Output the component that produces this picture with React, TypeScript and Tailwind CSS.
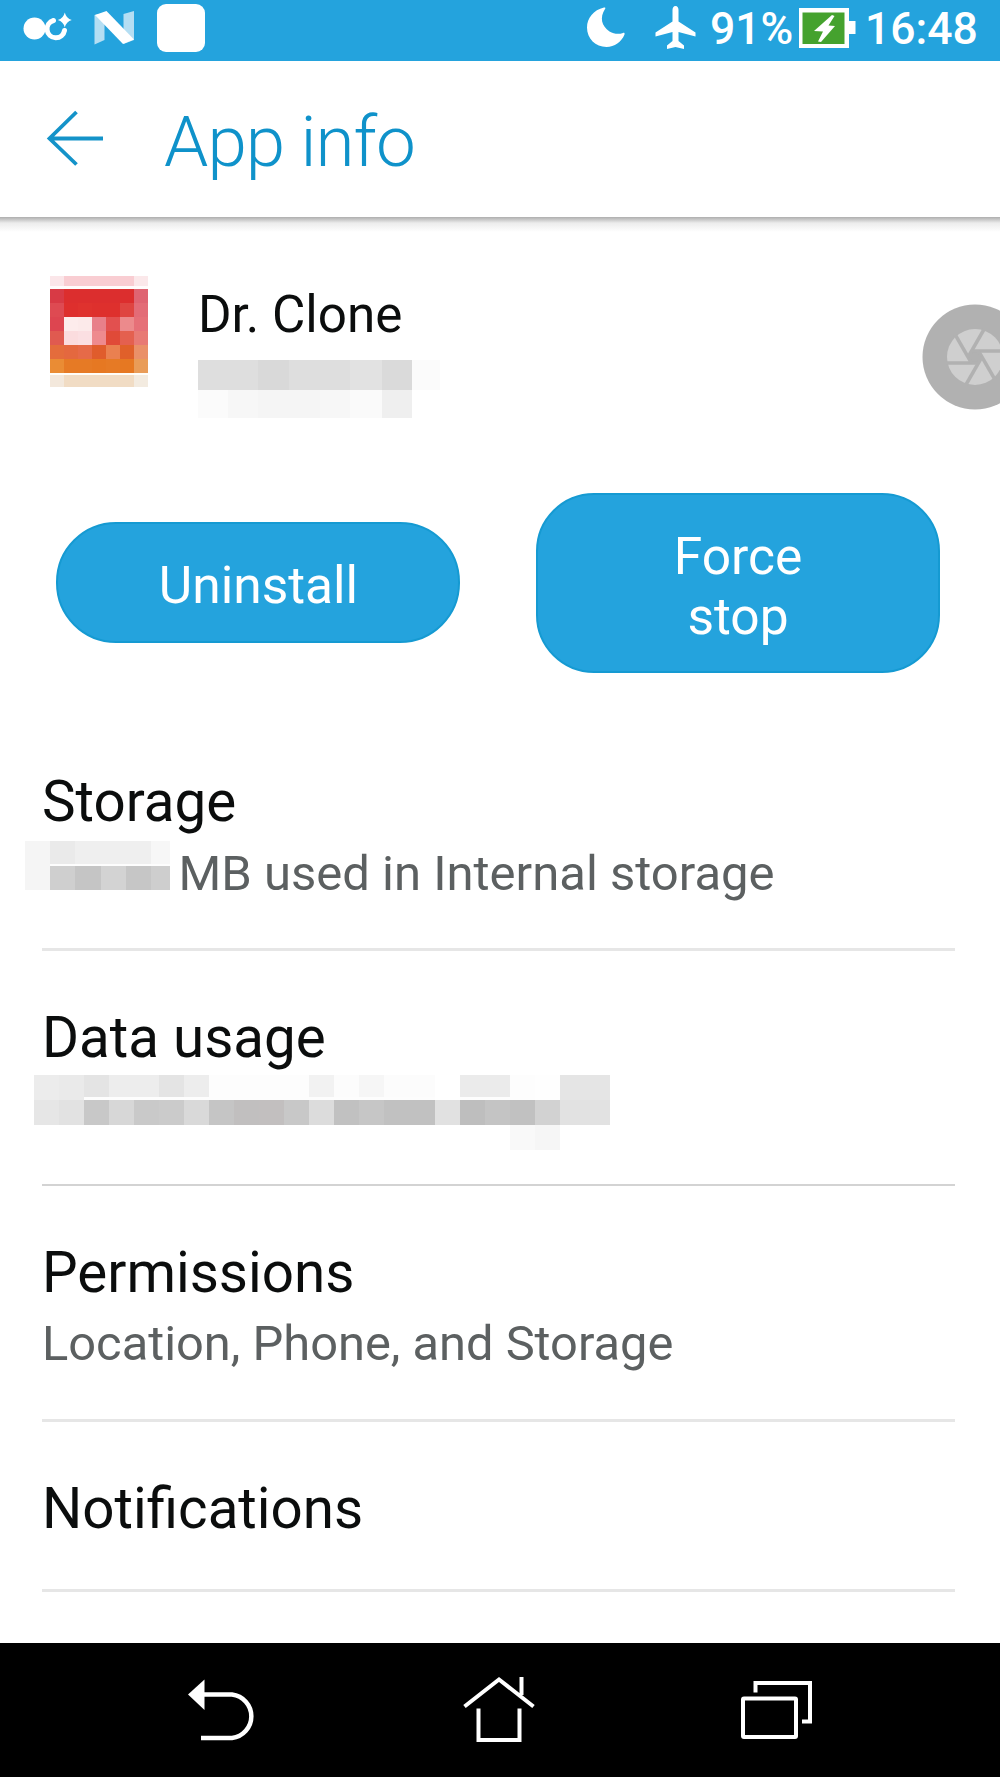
import type { ReactNode } from 'react';

type MosaicProps = {
  rows: string[];
  cellWidths: number[];
  rowHeights: number[];
  className?: string;
};

/** Pixelated block; each row is a space separated list of hex colours. */
function Mosaic({ rows, cellWidths, rowHeights, className = '' }: MosaicProps) {
  return (
    <div
      className={`grid shrink-0 ${className}`}
      style={{
        gridTemplateColumns: cellWidths.map((w) => `${w}px`).join(' '),
        gridTemplateRows: rowHeights.map((h) => `${h}px`).join(' '),
      }}
    >
      {rows.flatMap((row, y) =>
        row.split(' ').map((c, x) => <div key={`${y}-${x}`} style={{ backgroundColor: `#${c}` }} />),
      )}
    </div>
  );
}

const ICON_ROWS = [
  'fbe6e9 f9cdd2 f9cdd2 f9cdd2 f9cdd2 f9cdd2 fbe8ea',
  'fffbfb fffbfb fffbfb fffbfb fffbfb fffbfb fffbfb',
  'd83a45 dc2e2e dc2e2e dc2e2e dc2e2e dc2e2e df6472',
  'de4a52 de2f2d df322e de302d de302d df4541 e36c77',
  'dd4550 fdecec fceaea e8808a e2504f ec8a8c e67078',
  'e05a50 fbdcde fbdfe2 ee8a8e e04a38 e4604f e87a74',
  'e46c3c e4683f e66a48 e05c2c ea8050 e0602a ea9068',
  'ea8c34 e67a25 e67a25 e67822 e67a25 e67822 e99c58',
  'fffdf8 fffdf8 fffdf8 fffdf8 fffdf8 fffdf8 fffdf8',
  'f3e8dc f1dcc4 f1dcc4 f1dcc4 f1dcc4 f1dcc4 f3ebe0',
];

const PACKAGE_ROWS = [
  'dedede dedede d9d9d9 dedede dedede e2e2e2 dadada fbfbfb',
  'fbfbfb f7f7f7 f5f5f5 f5f5f5 f7f7f7 fafafa efefef ffffff',
];

const STORAGE_ROWS = [
  'f5f5f5 eaeaea efefef efefef efefef f7f7f7',
  'f5f5f5 fdfdfd fdfdfd fdfdfd fdfdfd fdfdfd',
  'f5f5f5 cfcfcf c5c5c5 d3d3d3 c6c6c6 cecece',
];

const DATA_ROWS = [
  'ececec eaeaea e4e4e4 ededed ededed e4e4e4 ededed fdfdfd fdfdfd fdfdfd fdfdfd f2f2f2 fcfcfc f6f6f6 fcfcfc fcfcfc ffffff ebebeb ebebeb fdfdfd fefefe e5e5e5 e5e5e5',
  'ececec eaeaea fdfdfd fdfdfd fdfdfd fdfdfd fdfdfd fdfdfd fdfdfd fdfdfd fdfdfd fdfdfd fdfdfd fdfdfd fdfdfd fdfdfd ffffff fdfdfd fdfdfd fdfdfd fefefe e5e5e5 e5e5e5',
  'e6e6e6 e2e2e2 c8c8c8 d7d7d7 c9c9c9 cbcbcb d9d9d9 c5c5c5 c1bfbf c2bfbf c8c8c8 dcdcdc c1c1c1 c6c6c6 c1c1c1 c1c1c1 e1e1e1 bebebe c4c4c4 c1c1c1 d2d2d2 e2e2e2 e2e2e2',
  'ffffff ffffff ffffff ffffff ffffff ffffff ffffff ffffff ffffff ffffff ffffff ffffff ffffff ffffff ffffff ffffff ffffff ffffff ffffff f9f9f9 f6f6f6 ffffff ffffff',
];

function StatusBar() {
  return (
    <div className="flex h-[61px] items-start bg-[#24a3dd]">
      <svg className="ml-5 h-[56px] w-[190px]" viewBox="20 0 190 56">
        <circle cx="34.5" cy="28.5" r="11" fill="#fff" />
        <path d="M53.500 20.500a8.800 8.800 0 1 0 11 10" fill="none" stroke="#fff" strokeWidth="5" strokeLinecap="round" />
        <path d="M64.800 12.500q1.400 6 7 7.500-5.600 1.500-7 7.500-1.400-6-7-7.500 5.600-1.500 7-7.500z" fill="#fff" />
        <path d="M94.500 15l10-2v27l-10 4.500zM123.500 14l10.500-3v29l-10.500 4z" fill="#b4def3" />
        <path d="M95 15l11.500-4L134 39.500 123 44z" fill="#fff" />
        <rect x="157" y="4" width="48" height="48" rx="9" fill="#fff" />
      </svg>
      <svg className="ml-[374px] h-[56px] w-[120px]" viewBox="584 0 120 56">
        <path d="M604 7.500C593.500 10 587 18 587 27.500c0 11 8.500 19.500 19.500 19.500 8 0 15-5 18-12.500.5-1.500-.5-2-1.500-1.600-4 1.600-9 1.300-13.500-1.500-8-5-10-14-4.500-22.300.8-1.200.3-1.800-1-1.600z" fill="#fff" />
        <path d="M675.500 6c2 0 3 1.800 3 4v11.500L695.500 32.500v4L678.500 32v9l5.500 4.500V49l-8.500-2-8.500 2v-3.500l5.500-4.500v-9L655.500 36.500v-4L672.500 21.500V10c0-2.200 1-4 3-4z" fill="#fff" />
      </svg>
      <span className="ml-[6px] w-[85px] text-[44.5px] leading-[59px] font-medium text-white">91%</span>
      <svg className="ml-[4px] h-[56px] w-[57px]" viewBox="799 0 57 56">
        <path d="M799 8h50v13h6.500v13H849v14h-50z" fill="#fff" />
        <rect x="802.500" y="12.500" width="42" height="31.500" fill="#45a22e" />
        <path d="M832 15l2.500 1-6 9.500 6.500.5-14 16-3-.5 5-10-9-.5z" fill="#fff" />
      </svg>
      <span className="ml-[9px] text-[44.5px] leading-[59px] font-medium text-white">16:48</span>
    </div>
  );
}

function Header() {
  return (
    <header>
      <div className="flex h-[156px] items-start">
        <svg className="mt-[48px] ml-[44px] h-[60px] w-[62px]" viewBox="44 109 62 60" fill="none" stroke="#1493c9" strokeWidth="3.8">
          <path d="M76.500 112L49.500 138.500l27 26M49.500 138.500H103" />
        </svg>
        <h1 className="mt-[41px] ml-[58px] text-[71px] leading-[80px] font-light tracking-[-1px] text-[#0f92ca]">App info</h1>
      </div>
      <div className="h-[15px] bg-linear-to-b from-[#aeaeae] via-[#ececec] via-40% to-white" />
    </header>
  );
}

function ActionButton({ children, className }: { children: ReactNode; className: string }) {
  return (
    <button
      className={`flex w-[404px] items-center justify-center border-2 border-[#159ad2] bg-[#24a3dd] pt-[8px] pl-px text-center text-[51.5px] leading-[60.500px] text-white ${className}`}
    >
      {children}
    </button>
  );
}

function Setting({ title, children, className }: { title: string; children?: ReactNode; className: string }) {
  return (
    <section className={`mr-[45px] ml-[42px] pt-[55px] ${className}`}>
      <h2 className="text-[56.500px] leading-[64px] text-[#0b0d0d]">{title}</h2>
      {children}
    </section>
  );
}

function FloatingShutter() {
  return (
    <svg className="absolute top-[303.500px] left-[922px] h-[106px] w-[106px]" viewBox="-53 -53 106 106">
      <circle r="52.500" fill="#b1b1b1" />
      <circle r="28" fill="#cfcfcf" />
      <path d="M-3.500 6h7L7 0 3.500-6h-7L-7 0z" fill="#b1b1b1" />
      {[0, 60, 120, 180, 240, 300].map((a) => (
        <path key={a} d="M-29 6H3.500" stroke="#b1b1b1" strokeWidth="3.600" transform={`rotate(${a})`} />
      ))}
    </svg>
  );
}

function NavBar() {
  return (
    <nav className="flex h-[134px] items-start bg-black pt-[29px]">
      <svg className="ml-[183px] h-[76px] w-[76px]" viewBox="183 1672 76 76">
        <path d="M188 1694.500l16.500-15v30.500z" fill="#fff" />
        <path d="M203 1694.500h29a21.900 21.900 0 0 1 0 43.500h-31" fill="none" stroke="#fff" strokeWidth="4.500" />
      </svg>
      <svg className="ml-[200px] h-[76px] w-[80px]" viewBox="459 1672 80 76" fill="none" stroke="#fff" strokeWidth="4">
        <path d="M464.500 1706.500l34.500-27 34.500 27M521.500 1677v18M478.500 1708.500v31.500h41v-31.500" />
      </svg>
      <svg className="ml-[199px] h-[76px] w-[80px]" viewBox="738 1672 80 76" fill="none" stroke="#fff" strokeWidth="4">
        <rect x="743" y="1698.500" width="53" height="38.500" rx="1" />
        <path d="M755.500 1692.500v-9.500H810v38.500h-8" />
      </svg>
    </nav>
  );
}

export default function App() {
  return (
    <div className="relative flex h-[1777px] w-[1000px] flex-col overflow-hidden bg-white font-[Roboto,sans-serif]">
      <StatusBar />
      <Header />
      <main className="flex-1">
        <div className="flex h-[261px] items-start pt-[43.500px]">
          <Mosaic
            className="ml-[50px]"
            rows={ICON_ROWS}
            cellWidths={[14, 14, 14, 14, 13.500, 14, 14]}
            rowHeights={[10.500, 3, 14, 14, 14, 14, 14, 14, 2, 11.500]}
          />
          <div className="ml-[50.500px] pt-[9px]">
            <div className="text-[51.2px] leading-[60px] text-[#0b0d0d]">Dr. Clone</div>
            <Mosaic
              className="mt-[15px]"
              rows={PACKAGE_ROWS}
              cellWidths={[30, 30, 31, 30.500, 30.500, 31.500, 30, 28]}
              rowHeights={[30, 28]}
            />
          </div>
        </div>
        <div className="ml-[56px] flex h-[180px] items-center gap-[75.500px]">
          <ActionButton className="-mt-[2px] h-[121px] rounded-[60px]">Uninstall</ActionButton>
          <ActionButton className="h-[180px] rounded-[58px]">
            Force
            <br />
            stop
          </ActionButton>
        </div>
        <div className="mt-[42px]">
          <Setting title="Storage" className="h-[236px] border-b-3 border-[#e6e6e6]">
            <div className="-ml-[17px] flex pt-[7px]">
              <Mosaic rows={STORAGE_ROWS} cellWidths={[25, 25, 25.500, 25, 25, 19]} rowHeights={[22.500, 2, 24.500]} />
              <p className="mt-[5px] ml-[9px] text-[49px] leading-[56px] text-[#5c6061]">MB used in Internal storage</p>
            </div>
          </Setting>
          <Setting title="Data usage" className="h-[235px] border-b-2 border-[#d3d3d3]">
            <Mosaic
              className="mt-[5px] -ml-[8px]"
              rows={DATA_ROWS}
              cellWidths={Array.from({ length: 23 }, () => 25.040)}
              rowHeights={[21.500, 3, 25, 25]}
            />
          </Setting>
          <Setting title="Permissions" className="h-[236px] border-b-3 border-[#e6e6e6]">
            <p className="mt-[11px] text-[48.8px] leading-[56px] text-[#5c6061]">Location, Phone, and Storage</p>
          </Setting>
          <Setting title="Notifications" className="h-[170px] border-b-3 border-[#e6e6e6]" />
        </div>
      </main>
      <FloatingShutter />
      <NavBar />
    </div>
  );
}
